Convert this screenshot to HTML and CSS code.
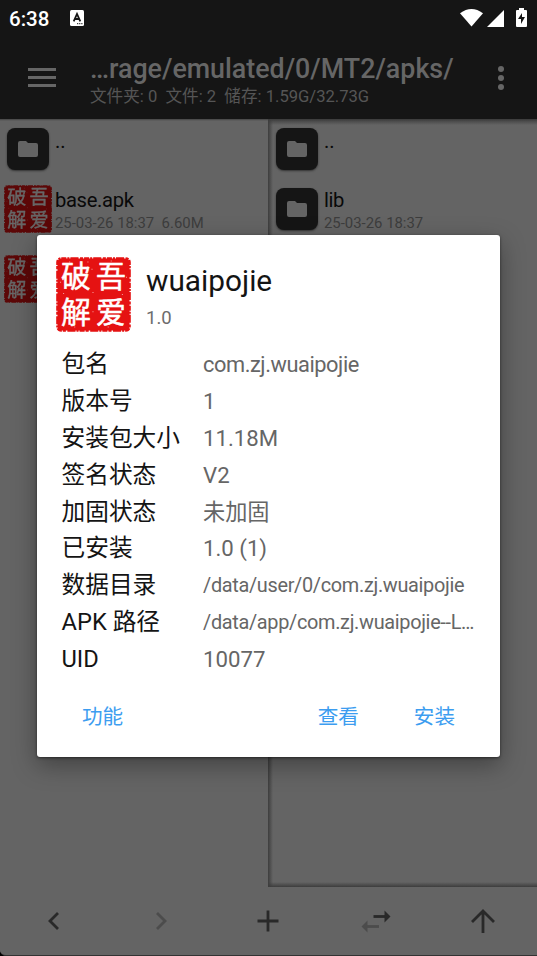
FILE: index.html
```html
<!DOCTYPE html>
<html lang="zh-CN">
<head>
<meta charset="utf-8">
<title>MT2</title>
<link rel="stylesheet" href="styles.css">
</head>
<body>
<svg class="defs" aria-hidden="true">
  <symbol id="folder" viewBox="0 0 20 16"><path d="M2 0h6l2 2h8q2 0 2 2v10q0 2-2 2H2q-2 0-2-2V2q0-2 2-2z"/></symbol>
  <symbol id="seal" viewBox="0 0 74 74">
    <rect x="1.5" y="1.5" width="71" height="71" rx="4" fill="#e51212"/>
    <rect x="1.2" y="1.2" width="71.6" height="71.6" rx="4" fill="none" stroke="#e51212" stroke-width="2" stroke-dasharray="5 1 2 1 8 1.5 3 1"/>
    <g class="seal-text"><text x="5" y="30">破</text><text x="39.5" y="30">吾</text><text x="5" y="65">解</text><text x="39.5" y="65">爱</text></g>
    <path d="M13 5h1M35 12h1M54 4h1M69 20h1M36 35h1M7 36h1M65 37h1M36 54h1M18 69h1M51 69h1M4 25h1M31 5h1" stroke="#fff" stroke-opacity=".6"/>
  </symbol>
</svg>
<div class="screen">
  <header class="top">
    <div class="status">
      <span class="clock">6:38</span>
      <svg class="badge" viewBox="0 0 14 16"><rect width="14" height="16" rx="1.5" fill="#fff"/><path d="M3.7 11.4 7 4l3.3 7.4M5 9h4" fill="none" stroke="#151515" stroke-width="1.8"/><path d="M7 13.7h6" stroke="#151515" stroke-dasharray="1.3 .8"/></svg>
      <svg class="signals" viewBox="0 0 68 20" fill="#fff"><path d="M0 5.2Q11.5-3.4 23 5.2L11.5 18.5z"/><path d="M27 19 44 2v17z"/><path d="M59 0h5v2h2q1 0 1 1v15q0 1-1 1h-9q-1 0-1-1V3q0-1 1-1h2z"/><path d="m62 5-4 6h3v5l4-7h-3z" fill="#151515"/></svg>
    </div>
    <div class="appbar">
      <svg class="menu" viewBox="0 0 28 19"><path d="M0 1.5h28M0 9.5h28M0 17.5h28" stroke="#666" stroke-width="2.8"/></svg>
      <div class="heading">
        <div class="path">…rage/emulated/0/MT2/apks/</div>
        <div class="stats">文件夹: 0&nbsp; 文件: 2&nbsp; 储存: 1.59G/32.73G</div>
      </div>
      <svg class="more" viewBox="0 0 6 24" fill="#666"><circle cx="3" cy="3" r="3"/><circle cx="3" cy="12" r="3"/><circle cx="3" cy="21" r="3"/></svg>
    </div>
  </header>
  <main class="panes">
    <section class="pane">
      <div class="item"><div class="tile"><svg><use href="#folder"/></svg></div><div class="info"><div class="name">..</div></div></div>
      <div class="item"><svg class="thumb"><use href="#seal"/></svg><div class="info"><div class="name">base.apk</div><div class="meta">25-03-26 18:37&nbsp; 6.60M</div></div></div>
      <div class="item"><svg class="thumb"><use href="#seal"/></svg></div>
    </section>
    <section class="pane active">
      <div class="item"><div class="tile"><svg><use href="#folder"/></svg></div><div class="info"><div class="name">..</div></div></div>
      <div class="item"><div class="tile"><svg><use href="#folder"/></svg></div><div class="info"><div class="name">lib</div><div class="meta">25-03-26 18:37</div></div></div>
    </section>
  </main>
  <nav class="toolbar">
    <svg viewBox="0 0 32 32"><path d="m20 8-8 8 8 8"/></svg>
    <svg class="off" viewBox="0 0 32 32"><path d="m12 8 8 8-8 8"/></svg>
    <svg viewBox="0 0 32 32"><path d="M16 5.5v21M5.5 16h21"/></svg>
    <svg viewBox="0 0 32 32"><path d="M13.500 11.500H26"/><path class="solid" d="m24.500 5.500 6 6-6 6z"/><g class="off"><path d="M19 21.500H7"/><path class="solid" d="m7.500 15.500-6 6 6 6z"/></g></svg>
    <svg viewBox="0 0 32 32"><path d="M16 28V6M5 17 16 6l11 11"/></svg>
  </nav>
</div>
<div class="dialog" role="dialog">
  <div class="app">
    <svg class="logo"><use href="#seal"/></svg>
    <div><div class="app-name">wuaipojie</div><div class="version">1.0</div></div>
  </div>
  <dl class="details">
    <dt>包名</dt><dd class="package">com.zj.wuaipojie</dd>
    <dt>版本号</dt><dd>1</dd>
    <dt>安装包大小</dt><dd>11.18M</dd>
    <dt>签名状态</dt><dd>V2</dd>
    <dt>加固状态</dt><dd>未加固</dd>
    <dt>已安装</dt><dd>1.0 (1)</dd>
    <dt>数据目录</dt><dd class="small">/data/user/0/com.zj.wuaipojie</dd>
    <dt>APK 路径</dt><dd class="small">/data/app/com.zj.wuaipojie--L…</dd>
    <dt>UID</dt><dd>10077</dd>
  </dl>
  <div class="actions"><span>功能</span><span class="view">查看</span><span>安装</span></div>
</div>
</body>
</html>
```
FILE: styles.css
```css
* { box-sizing: border-box; }
body { margin: 0; background: #000; font-family: Roboto, "Noto Sans CJK SC", sans-serif; }
.defs { position: absolute; width: 0; height: 0; }
.screen { width: 537px; height: 956px; display: flex; flex-direction: column; background: #646464; border-bottom: 1px solid #333; border-bottom-left-radius: 6px; overflow: hidden; }
.top { height: 119px; flex: none; background: #151515; }
.status { height: 36px; display: flex; align-items: center; padding: 0 9px; }
.clock { width: 61px; color: #fff; font-size: 20.500px; font-weight: 500; line-height: 36px; padding-top: 1px; }
.badge { width: 14px; height: 16px; }
.signals { width: 68px; height: 20px; margin-left: auto; }
.appbar { height: 83px; display: flex; align-items: flex-start; padding: 0 33px 0 28px; }
.menu { width: 28px; height: 19px; margin-top: 32px; }
.heading { margin-left: 34px; flex: 1; white-space: nowrap; }
.path { color: #666; font-size: 26.800px; font-weight: 500; line-height: 32px; margin-top: 17px; }
.stats { color: #555; font-size: 16.600px; line-height: 20px; margin-top: 2px; }
.more { width: 6px; height: 24px; margin-top: 30px; }
.panes { height: 768px; flex: none; display: grid; grid-template-columns: 268px 269px; background: linear-gradient(#444, transparent) top / 100% 2px no-repeat; }
.pane { padding: 0 4px; }
.active { background: linear-gradient(90deg, #3d3d3d, transparent) left / 5px 100% no-repeat, linear-gradient(#3d3d3d, transparent) top / 100% 6px no-repeat, linear-gradient(transparent, #3d3d3d) bottom / 100% 5px no-repeat; }
.item { height: 60px; display: flex; align-items: center; }
.item:nth-child(3) { margin-top: 10px; }
.tile { width: 42px; height: 42px; margin: 0 3px; border-radius: 8px; background: #151515; display: flex; align-items: center; justify-content: center; box-shadow: 0 1px 2px #333; }
.tile svg { width: 20px; height: 16px; fill: #646464; }
.active .tile { margin-left: 4px; }
.thumb { width: 48px; height: 48px; filter: brightness(.4); }
.seal-text { fill: #fff; stroke: #fff; stroke-width: .5px; stroke-linejoin: round; font: 400 29.500px "Noto Sans CJK SC", sans-serif; }
.info { height: 48px; margin-left: 3px; padding-top: 2px; white-space: nowrap; }
.name { color: #090909; font-size: 20.200px; line-height: 27px; letter-spacing: -.35px; }
.item:first-child .name { margin-top: 1px; letter-spacing: 0; }
.meta { color: #3d3d3d; font-size: 14.900px; line-height: 18px; }
.toolbar { height: 68px; flex: none; display: grid; grid-template-columns: repeat(5, 1fr); align-items: center; justify-items: center; background: #646464; }
.toolbar svg { width: 32px; height: 32px; fill: none; stroke: #292929; stroke-width: 2.8; }
.toolbar .off { stroke: #4c4c4c; }
.toolbar .solid { fill: #292929; stroke: none; }
.toolbar .off .solid { fill: #4c4c4c; }
.dialog { position: absolute; left: 37px; top: 235px; width: 463px; height: 522px; padding: 22px 0 0 19px; background: #fff; border-radius: 3px; box-shadow: 0 8px 24px rgba(0,0,0,.35), 0 1px 3px rgba(0,0,0,.5); }
.app { display: flex; height: 89px; }
.logo { width: 75px; height: 75px; margin-right: 15px; }
.app-name { color: #141414; font-size: 29.800px; line-height: 36px; margin-top: 6px; }
.version { color: #6c6c6c; font-size: 18.500px; line-height: 24px; margin-top: 7px; }
.details { margin: 0; padding-left: 5.500px; display: grid; grid-template-columns: 141.500px 1fr; grid-auto-rows: 36.800px; align-items: center; white-space: nowrap; }
dt { color: #141414; font-size: 23.700px; line-height: 36px; }
dd { margin: 0; color: #666; font-size: 22.200px; line-height: 36px; }
.package { font-size: 21.800px; letter-spacing: -.43px; padding-top: 2px; }
.small { font-size: 19.900px; letter-spacing: -.32px; padding-top: 2px; }
.actions { display: flex; padding: 22px 45px 0 26px; color: #3c9df0; font-size: 20.600px; line-height: 36px; }
.view { margin-left: auto; margin-right: 55px; }
```
